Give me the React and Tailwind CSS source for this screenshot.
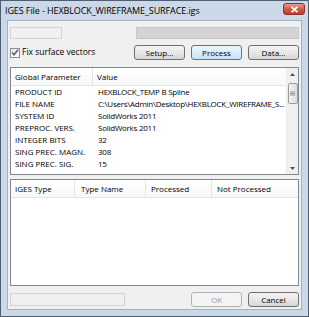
import * as React from "react";

const params = [
  ["PRODUCT ID", "HEXBLOCK_TEMP B Spline"],
  ["FILE NAME", "C:\\Users\\Admin\\Desktop\\HEXBLOCK_WIREFRAME_S..."],
  ["SYSTEM ID", "SolidWorks 2011"],
  ["PREPROC. VERS.", "SolidWorks 2011"],
  ["INTEGER BITS", "32"],
  ["SING PREC. MAGN.", "308"],
  ["SING PREC. SIG.", "15"],
];

const Btn = ({ children, variant = "normal", className = "" }) => {
  const styles = {
    normal:
      "border-[#707070] bg-gradient-to-b from-[#f4f4f4] via-[#e8e8e8] to-[#d6d6d6] text-black",
    default:
      "border-[#3c7fb1] bg-gradient-to-b from-[#eaf6fd] via-[#dbeefb] to-[#c6e2f6] text-black",
    disabled: "border-[#adb2b5] bg-[#f4f4f4] text-[#9a9a9a]",
  };
  return (
    <div
      className={
        "h-[15px] w-[51px] rounded-[3px] border flex items-center justify-center text-[8px] " +
        styles[variant] +
        " " +
        className
      }
    >
      {children}
    </div>
  );
};

const App = () => {
  return (
    <div
      className="w-[309px] h-[317px] bg-[#cad8e7] border border-[#4d5f70] flex flex-col text-black overflow-hidden"
      style={{ fontFamily: '"Open Sans", "Noto Sans", sans-serif' }}
    >
      {/* title bar */}
      <div className="h-[19px] flex items-center justify-between pl-[4px] pr-[3px]">
        <span className="text-[9px] tracking-[-0.1px]">IGES File - HEXBLOCK_WIREFRAME_SURFACE.igs</span>
        <div className="w-[22px] h-[12px] mt-[-3px] rounded-[3px] border border-[#8a2e2e] bg-gradient-to-b from-[#e6a08e] via-[#cf5a46] to-[#c0392b] flex items-center justify-center">
          <svg width="9" height="7" viewBox="0 0 9 7">
            <path d="M1.5 0.8 L7.5 6.2 M7.5 0.8 L1.5 6.2" stroke="#fff" strokeWidth="1.8" />
          </svg>
        </div>
      </div>

      {/* client area */}
      <div className="flex-1 mx-[6px] mb-[6px] bg-[#f0f0f0] border border-[#a4b2c0] flex flex-col pl-[2px] pr-[1px] pt-[6px]">
        <div className="flex items-center justify-between h-[12px]">
          <div className="w-[52px] h-[12px] border border-[#d4d4d4] bg-[#f0f0f0]" />
          <div className="w-[163px] h-[12px] bg-[#d4d4d4] border border-[#c8c8c8] mr-[1px]" />
        </div>

        <div className="flex items-center justify-between mt-[6px] h-[15px]">
          <div className="flex items-center gap-[2px]">
            <div className="w-[10px] h-[10px] border border-[#8e8f8f] bg-gradient-to-b from-[#e6e6e6] to-[#fdfdfd] flex items-center justify-center">
              <svg width="8" height="7" viewBox="0 0 8 7">
                <path d="M1 3.5 L3 5.8 L7 0.8" fill="none" stroke="#4a5f97" strokeWidth="1.5" />
              </svg>
            </div>
            <span className="text-[8.5px]">Fix surface vectors</span>
          </div>
          <div className="flex gap-[6px] mr-[1px]">
            <Btn className="w-[49px]">Setup...</Btn>
            <Btn variant="default">Process</Btn>
            <Btn>Data...</Btn>
          </div>
        </div>

        {/* global parameters list */}
        <div className="mt-[7px] h-[108px] border border-[#828790] bg-white flex mr-[1px]">
          <div className="flex-1 flex flex-col">
            <div className="h-[18px] flex items-center text-[8px] border-b border-[#e5e5e5] bg-gradient-to-b from-white to-[#f7f8fa]">
              <div className="w-[82px] pl-[4px] h-full flex items-center border-r border-[#e5e5e5]">Global Parameter</div>
              <div className="pl-[4px]">Value</div>
            </div>
            <div className="flex flex-col">
              {params.map(([k, v]) => (
                <div key={k} className="h-[12px] flex items-center text-[8px] whitespace-nowrap">
                  <div className="w-[82px] pl-[4px]">{k}</div>
                  <div className="pl-[5px] tracking-[-0.25px]">{v}</div>
                </div>
              ))}
            </div>
          </div>
          <div className="w-[12px] bg-[#f0f0f0] border-l border-[#ececec] flex flex-col items-center">
            <div className="h-[12px] flex items-center justify-center">
              <svg width="5" height="3" viewBox="0 0 5 3"><path d="M0 3 L2.5 0 L5 3Z" fill="#4d4d4d" /></svg>
            </div>
            <div className="mt-[3px] w-[10px] h-[21px] rounded-[2px] border border-[#9a9a9a] bg-gradient-to-r from-[#f2f2f2] to-[#dcdcdc] flex items-center justify-center">
              <svg width="5" height="5" viewBox="0 0 5 5"><path d="M0 1H5M0 2.5H5M0 4H5" stroke="#777" strokeWidth="0.7" /></svg>
            </div>
            <div className="flex-1" />
            <div className="h-[12px] flex items-center justify-center">
              <svg width="5" height="3" viewBox="0 0 5 3"><path d="M0 0 L2.5 3 L5 0Z" fill="#4d4d4d" /></svg>
            </div>
          </div>
        </div>

        {/* IGES type list */}
        <div className="mt-[4px] h-[107px] border border-[#828790] bg-white flex flex-col mr-[1px]">
          <div className="h-[18px] flex items-center text-[8px] border-b border-[#e5e5e5] bg-gradient-to-b from-white to-[#f7f8fa]">
            <div className="w-[64px] pl-[4px] h-full flex items-center border-r border-[#e5e5e5]">IGES Type</div>
            <div className="w-[71px] pl-[6px] h-full flex items-center border-r border-[#e5e5e5]">Type Name</div>
            <div className="w-[66px] pl-[5px] h-full flex items-center border-r border-[#e5e5e5]">Processed</div>
            <div className="pl-[5px]">Not Processed</div>
          </div>
        </div>

        <div className="mt-[6px] flex items-center justify-between h-[15px] mr-[1px]">
          <div className="w-[115px] h-[13px] border border-[#d4d4d4] bg-[#f0f0f0]" />
          <div className="flex gap-[6px]">
            <Btn variant="disabled">OK</Btn>
            <Btn>Cancel</Btn>
          </div>
        </div>
      </div>
    </div>
  );
};

export default App;
